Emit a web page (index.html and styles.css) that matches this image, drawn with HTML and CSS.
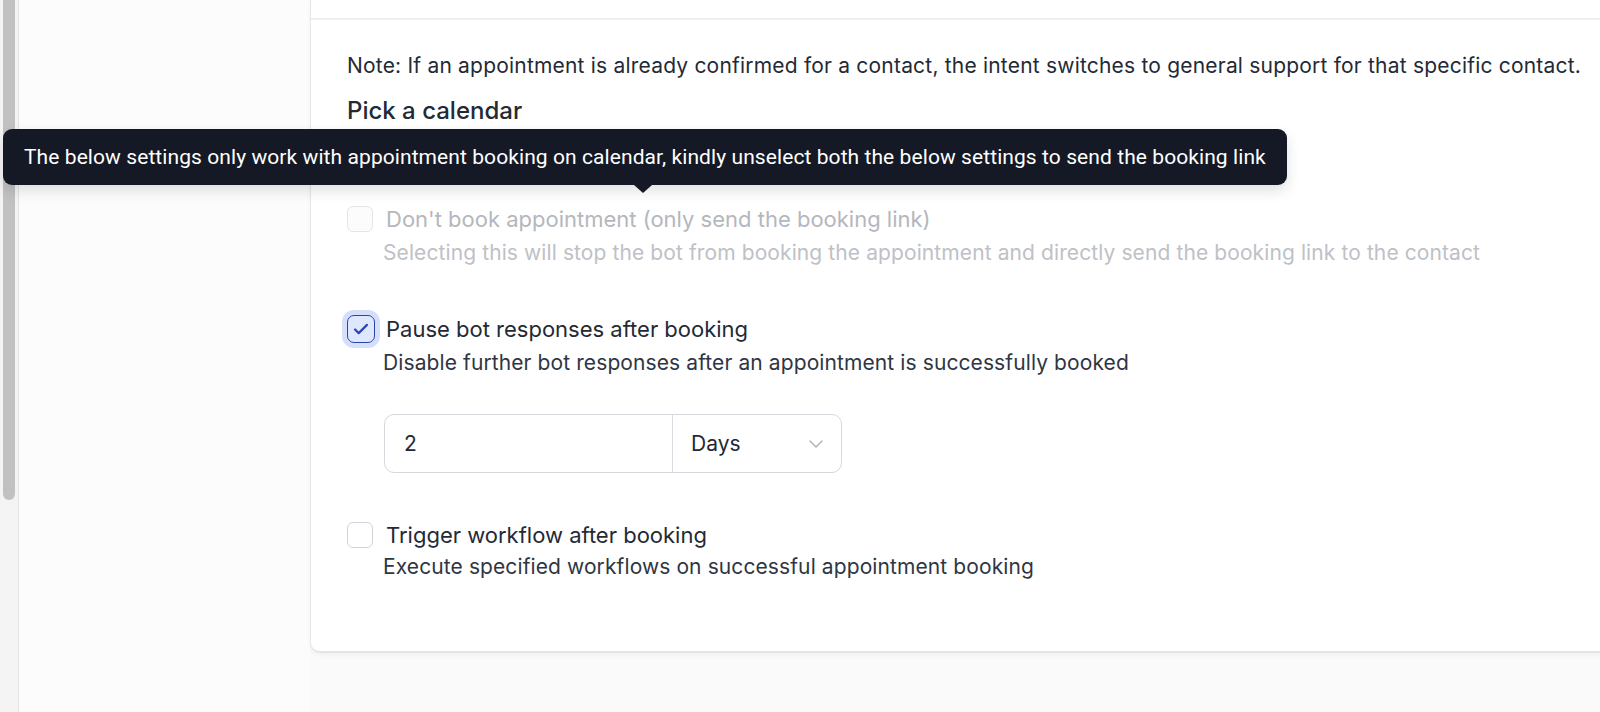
FILE: index.html
```html
<!DOCTYPE html>
<html lang="en">
<head>
<meta charset="utf-8">
<title>Appointment booking settings</title>
<link rel="stylesheet" href="styles.css">
</head>
<body>
<div class="scrollbar"><div class="thumb"></div></div>
<aside class="sidebar"></aside>
<main class="main">
  <section class="card">
    <div class="card-head"></div>
    <div class="card-body">
      <p class="note">Note: If an appointment is already confirmed for a contact, the intent switches to general support for that specific contact.</p>
      <h3 class="title">Pick a calendar</h3>
      <div class="calendar-slot"></div>

      <div class="option disabled">
        <div class="tooltip">The below settings only work with appointment booking on calendar, kindly unselect both the below settings to send the booking link</div>
        <div class="option-row">
          <span class="box"></span>
          <span class="label">Don't book appointment (only send the booking link)</span>
        </div>
        <p class="desc">Selecting this will stop the bot from booking the appointment and directly send the booking link to the contact</p>
      </div>

      <div class="option">
        <div class="option-row">
          <span class="box checked">
            <svg viewBox="0 0 24 24" width="22" height="22"><path d="M5.5 12.5l4 4 9-9" fill="none" stroke="#2a48b0" stroke-width="2.4" stroke-linecap="round" stroke-linejoin="round"/></svg>
          </span>
          <span class="label">Pause bot responses after booking</span>
        </div>
        <p class="desc">Disable further bot responses after an appointment is successfully booked</p>
        <div class="input-group">
          <div class="num">2</div>
          <div class="unit">
            <span>Days</span>
            <svg viewBox="0 0 14 8" width="14" height="8"><path d="M1 1l6 6 6-6" fill="none" stroke="#a3a8b2" stroke-width="1.2" stroke-linecap="round" stroke-linejoin="round"/></svg>
          </div>
        </div>
      </div>

      <div class="option last">
        <div class="option-row">
          <span class="box"></span>
          <span class="label">Trigger workflow after booking</span>
        </div>
        <p class="desc desc-last">Execute specified workflows on successful appointment booking</p>
      </div>
    </div>
  </section>
</main>
</body>
</html>
```
FILE: styles.css
```css
html, body {
  margin: 0;
  padding: 0;
}
body {
  width: 1600px;
  height: 712px;
  overflow: hidden;
  display: flex;
  align-items: flex-start;
  background: #fafafa;
  font-family: Inter, "Noto Sans", sans-serif;
  color: #1f2937;
}
.scrollbar {
  width: 18px;
  height: 712px;
  flex: 0 0 18px;
  background: #f4f4f4;
  border-right: 1px solid #e4e4e4;
}
.thumb {
  margin-left: 3px;
  width: 12px;
  height: 500px;
  background: #c1c1c1;
  border-radius: 0 0 6px 6px;
}
.sidebar {
  flex: 0 0 291px;
  height: 712px;
  background: #fcfcfc;
}
.main {
  flex: 1;
  min-width: 0;
}
.card {
  width: 1340px;
  background: #fff;
  border-left: 1px solid #e6e7eb;
  border-bottom: 2px solid #e4e5e9;
  border-radius: 0 0 0 10px;
  box-shadow: 0 2px 4px rgba(16, 24, 40, 0.04);
}
.card-head {
  height: 18px;
  border-bottom: 2px solid #eeeff1;
}
.card-body {
  padding: 32px 0 70px 36px;
}
.note {
  margin: 0;
  font-size: 21px;
  letter-spacing: 0.2px;
  line-height: 28px;
  color: #232a36;
}
.title {
  margin: 17px 0 0;
  font-size: 24px;
  line-height: 28px;
  font-weight: 500;
  color: #232a36;
}
.calendar-slot {
  height: 80px;
}
.option {
  position: relative;
  margin-bottom: 48px;
}
.option.last {
  margin-bottom: 0;
}
.option-row {
  display: flex;
  align-items: center;
  height: 28px;
}
.box {
  box-sizing: border-box;
  width: 26px;
  height: 26px;
  flex: 0 0 26px;
  border: 1.5px solid #d0d4da;
  border-radius: 6px;
  background: #fff;
  display: flex;
  align-items: center;
  justify-content: center;
}
.box.checked {
  width: 28px;
  height: 28px;
  flex-basis: 28px;
  margin-right: -2px;
  border-color: #2b47a8;
  border-radius: 7px;
  background: #dfe7fd;
  box-shadow: 0 0 0 5px #d5dffb;
}
.label {
  margin-left: 13px;
  font-size: 22px;
  line-height: 28px;
  color: #232a36;
}
.desc {
  margin: 6px 0 0 36px;
  font-size: 21px;
  letter-spacing: 0.1px;
  line-height: 28px;
  color: #2f3643;
}
.desc-last {
  margin-top: 4px;
}
.disabled .box {
  border-color: #e3e5e9;
  background: #fcfcfc;
}
.disabled .label {
  color: #b4b7bd;
}
.disabled .desc {
  color: #bec1c6;
}
.input-group {
  display: flex;
  width: 458px;
  height: 59px;
  box-sizing: border-box;
  margin: 37px 0 0 37px;
  border: 1px solid #d5d8dd;
  border-radius: 10px;
  font-size: 21px;
  color: #1f2937;
}
.num {
  flex: 0 0 288px;
  display: flex;
  align-items: center;
  padding-left: 19px;
  box-sizing: border-box;
  border-right: 1px solid #d9dce1;
}
.unit {
  flex: 1;
  display: flex;
  align-items: center;
  justify-content: space-between;
  padding: 0 18px 0 18px;
}
.tooltip {
  position: absolute;
  left: -344px;
  top: -76px;
  width: 1284px;
  height: 56px;
  box-sizing: border-box;
  padding-left: 21px;
  display: flex;
  align-items: center;
  background: #141925;
  color: #fff;
  border-radius: 9px;
  font-family: Roboto, "Noto Sans", sans-serif;
  font-size: 21px;
  letter-spacing: 0.08px;
  box-shadow: 0 6px 14px rgba(0, 0, 0, 0.12);
  z-index: 2;
}
.tooltip::after {
  content: "";
  position: absolute;
  left: 631px;
  top: 56px;
  border-left: 9px solid transparent;
  border-right: 9px solid transparent;
  border-top: 8px solid #141925;
}
```
